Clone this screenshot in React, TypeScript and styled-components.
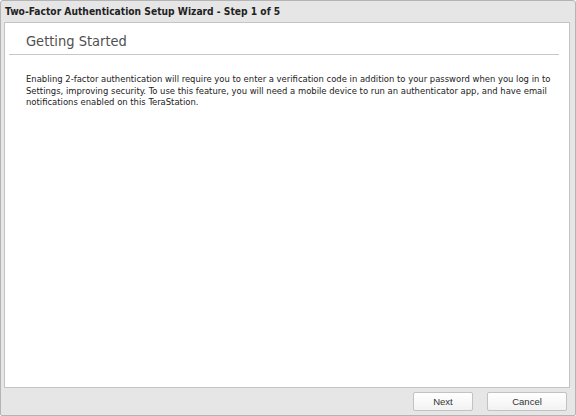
import React from "react";
import styled, { createGlobalStyle } from "styled-components";

const Global = createGlobalStyle`
  html, body { margin: 0; padding: 0; background: #ffffff; }
  body { width: 576px; height: 416px; overflow: hidden; }
  #root { width: 576px; height: 416px; }
`;

const Window = styled.div`
  box-sizing: border-box;
  width: 576px;
  height: 416px;
  display: flex;
  flex-direction: column;
  background: #e6e6e6;
  border: 1px solid #b4b4b4;
  border-radius: 3px 3px 2px 2px;
  font-family: "DejaVu Sans Condensed", "DejaVu Sans", sans-serif;
`;

const TitleBar = styled.div`
  height: 21px;
  display: flex;
  align-items: center;
  padding-left: 4px;
  font-size: 10.2px;
  font-weight: bold;
  color: #222;
  flex-shrink: 0;
`;

const Panel = styled.div`
  flex: 1;
  margin: 0 5px 0 3px;
  background: #ffffff;
  border: 1px solid #c4c4c4;
  display: flex;
  flex-direction: column;
`;

const Heading = styled.h1`
  margin: 0 10px 0 4px;
  padding: 10px 0 4px 17px;
  font-size: 14.5px;
  font-weight: normal;
  color: #505050;
  border-bottom: 1px solid #c8c8c8;
  line-height: 17px;
`;

const Body = styled.p`
  margin: 18px 0 0 21px;
  font-size: 9.4px;
  line-height: 11.5px;
  color: #222;
  white-space: nowrap;
`;

const Footer = styled.div`
  height: 27px;
  flex-shrink: 0;
  display: flex;
  justify-content: flex-end;
  align-items: center;
  gap: 14px;
  padding-right: 8px;
`;

const Button = styled.button<{ $w: number }>`
  width: ${(p) => p.$w}px;
  height: 19px;
  padding: 0;
  border: 1px solid #c2c2c2;
  border-radius: 2px;
  background: linear-gradient(#ffffff, #f2f2f2);
  font-family: "Liberation Sans", sans-serif;
  font-size: 9.5px;
  color: #333;
`;

export default function App() {
  return (
    <>
      <Global />
      <Window>
        <TitleBar>Two-Factor Authentication Setup Wizard - Step 1 of 5</TitleBar>
        <Panel>
          <Heading>Getting Started</Heading>
          <Body>
            Enabling 2-factor authentication will require you to enter a verification code in addition to your password when you log in to
            <br />
            Settings, improving security. To use this feature, you will need a mobile device to run an authenticator app, and have email
            <br />
            notifications enabled on this TeraStation.
          </Body>
        </Panel>
        <Footer>
          <Button $w={60}>Next</Button>
          <Button $w={80}>Cancel</Button>
        </Footer>
      </Window>
    </>
  );
}
